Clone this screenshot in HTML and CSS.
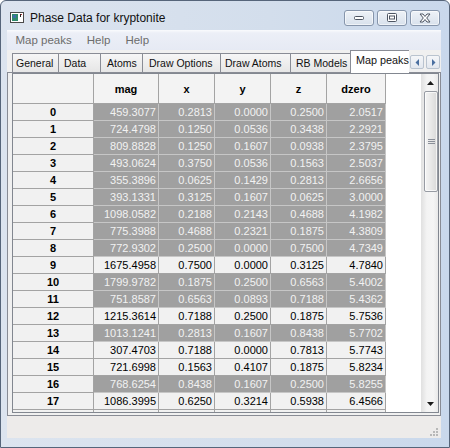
FILE: index.html
```html
<!DOCTYPE html>
<html>
<head>
<meta charset="utf-8">
<link rel="stylesheet" href="styles.css">
</head>
<body>
<div class="window">
  <div class="titlebar">
    <svg class="app-icon" width="14" height="11" viewBox="0 0 14 11">
      <rect x="0.5" y="0.5" width="13" height="10" fill="#ffffff" stroke="#4a4a4a"/>
      <rect x="2" y="2" width="6" height="7" fill="#2f8a6c"/>
      <rect x="3" y="3" width="3" height="3" fill="#3d6fa8"/>
      <rect x="10" y="2" width="1" height="3" fill="#222"/>
      <rect x="11" y="2" width="1" height="1" fill="#c03030"/>
    </svg>
    <span class="title">Phase Data for kryptonite</span>
    <div class="caption-buttons">
      <div class="cbtn">
        <svg width="12" height="6" viewBox="0 0 12 6"><rect x="1.5" y="1.5" width="9" height="3" rx="1" fill="#fff" stroke="#4d5562"/></svg>
      </div>
      <div class="cbtn">
        <svg width="10" height="9" viewBox="0 0 10 9"><rect x="0.5" y="0.5" width="9" height="8" rx="1" fill="#fff" stroke="#4d5562"/><rect x="2.5" y="3" width="5" height="3" fill="#fff" stroke="#4d5562"/></svg>
      </div>
      <div class="cbtn">
        <svg width="12" height="10" viewBox="0 0 12 10"><path d="M1 1 L4 1 L6 3.5 L8 1 L11 1 L7.7 5 L11 9 L8 9 L6 6.5 L4 9 L1 9 L4.3 5 Z" fill="#fff" stroke="#4d5562" stroke-width="1" stroke-linejoin="round"/></svg>
      </div>
    </div>
  </div>
  <div class="client">
    <div class="menubar">
      <span class="menu-item">Map peaks</span>
      <span class="menu-item">Help</span>
      <span class="menu-item">Help</span>
    </div>
    <div class="tabstrip">
      <div class="tab tab-general">General</div>
      <div class="tab tab-data">Data</div>
      <div class="tab tab-atoms">Atoms</div>
      <div class="tab tab-drawopt">Draw Options</div>
      <div class="tab tab-drawatoms">Draw Atoms</div>
      <div class="tab tab-rb">RB Models</div>
      <div class="tab tab-map selected">Map peaks</div>
      <div class="tab-arrows">
        <div class="tab-arrow"><svg width="5" height="7" viewBox="0 0 5 7"><path d="M4 0 L0.5 3.5 L4 7 Z" fill="#4a6fa0"/></svg></div>
        <div class="tab-arrow"><svg width="5" height="7" viewBox="0 0 5 7"><path d="M1 0 L4.5 3.5 L1 7 Z" fill="#4a6fa0"/></svg></div>
      </div>
    </div>
    <div class="panel">
      <div class="gridframe">
        <div class="gridview">
          <table class="grid">
            <colgroup>
              <col class="c-rh"><col class="c-mag"><col class="c-x"><col class="c-y"><col class="c-z"><col class="c-dz">
            </colgroup>
            <thead>
              <tr><th></th><th>mag</th><th>x</th><th>y</th><th>z</th><th>dzero</th></tr>
            </thead>
            <tbody>
              <tr class="sel"><th>0</th><td>459.3077</td><td>0.2813</td><td>0.0000</td><td>0.2500</td><td>2.0517</td></tr>
              <tr class="sel"><th>1</th><td>724.4798</td><td>0.1250</td><td>0.0536</td><td>0.3438</td><td>2.2921</td></tr>
              <tr class="sel"><th>2</th><td>809.8828</td><td>0.1250</td><td>0.1607</td><td>0.0938</td><td>2.3795</td></tr>
              <tr class="sel"><th>3</th><td>493.0624</td><td>0.3750</td><td>0.0536</td><td>0.1563</td><td>2.5037</td></tr>
              <tr class="sel"><th>4</th><td>355.3896</td><td>0.0625</td><td>0.1429</td><td>0.2813</td><td>2.6656</td></tr>
              <tr class="sel"><th>5</th><td>393.1331</td><td>0.3125</td><td>0.1607</td><td>0.0625</td><td>3.0000</td></tr>
              <tr class="sel"><th>6</th><td>1098.0582</td><td>0.2188</td><td>0.2143</td><td>0.4688</td><td>4.1982</td></tr>
              <tr class="sel"><th>7</th><td>775.3988</td><td>0.4688</td><td>0.2321</td><td>0.1875</td><td>4.3809</td></tr>
              <tr class="sel"><th>8</th><td>772.9302</td><td>0.2500</td><td>0.0000</td><td>0.7500</td><td>4.7349</td></tr>
              <tr><th>9</th><td>1675.4958</td><td>0.7500</td><td>0.0000</td><td>0.3125</td><td>4.7840</td></tr>
              <tr class="sel"><th>10</th><td>1799.9782</td><td>0.1875</td><td>0.2500</td><td>0.6563</td><td>5.4002</td></tr>
              <tr class="sel"><th>11</th><td>751.8587</td><td>0.6563</td><td>0.0893</td><td>0.7188</td><td>5.4362</td></tr>
              <tr><th>12</th><td>1215.3614</td><td>0.7188</td><td>0.2500</td><td>0.1875</td><td>5.7536</td></tr>
              <tr class="sel"><th>13</th><td>1013.1241</td><td>0.2813</td><td>0.1607</td><td>0.8438</td><td>5.7702</td></tr>
              <tr><th>14</th><td>307.4703</td><td>0.7188</td><td>0.0000</td><td>0.7813</td><td>5.7743</td></tr>
              <tr><th>15</th><td>721.6998</td><td>0.1563</td><td>0.4107</td><td>0.1875</td><td>5.8234</td></tr>
              <tr class="sel"><th>16</th><td>768.6254</td><td>0.8438</td><td>0.1607</td><td>0.2500</td><td>5.8255</td></tr>
              <tr><th>17</th><td>1086.3995</td><td>0.6250</td><td>0.3214</td><td>0.5938</td><td>6.4566</td></tr>
              <tr><th></th><td></td><td></td><td></td><td></td><td></td></tr>
            </tbody>
          </table>
        </div>
        <div class="vscroll">
          <div class="sbtn"><svg width="7" height="4" viewBox="0 0 7 4"><path d="M3.5 0 L7 4 L0 4 Z" fill="#1a1a1a"/></svg></div>
          <div class="track">
            <div class="thumb">
              <svg width="7" height="5" viewBox="0 0 7 5"><path d="M0 0.5 H7 M0 2.5 H7 M0 4.5 H7" stroke="#8a8f99" stroke-width="1"/></svg>
            </div>
          </div>
          <div class="sbtn"><svg width="7" height="4" viewBox="0 0 7 4"><path d="M0 0 L7 0 L3.5 4 Z" fill="#1a1a1a"/></svg></div>
        </div>
      </div>
    </div>
    <div class="statusbar">
      <svg class="grip" width="9" height="9" viewBox="0 0 9 9">
        <rect x="6" y="0" width="2" height="2" fill="#b8b8b8"/>
        <rect x="3" y="3" width="2" height="2" fill="#b8b8b8"/>
        <rect x="6" y="3" width="2" height="2" fill="#b8b8b8"/>
        <rect x="0" y="6" width="2" height="2" fill="#b8b8b8"/>
        <rect x="3" y="6" width="2" height="2" fill="#b8b8b8"/>
        <rect x="6" y="6" width="2" height="2" fill="#b8b8b8"/>
      </svg>
    </div>
  </div>
</div>
</body>
</html>
```

FILE: styles.css
```css
* { box-sizing: border-box; }
html, body { margin: 0; padding: 0; }
body {
  width: 450px;
  height: 448px;
  overflow: hidden;
  background: #ffffff;
  font-family: "Liberation Sans", Arial, sans-serif;
}

.window {
  width: 450px;
  height: 448px;
  border: 1px solid #56657a;
  border-radius: 6px 6px 0 0;
  background: linear-gradient(to right, #dce4ef 0%, #d3deec 60%, #c9d8ec 100%);
  padding: 0 8px 9px 6px;
  display: flex;
  flex-direction: column;
}

.titlebar {
  height: 29px;
  flex: none;
  display: flex;
  align-items: center;
  padding-left: 3px;
}
.app-icon { margin-top: 4px; flex: none; }
.title {
  margin-left: 6px;
  margin-top: 4px;
  font-size: 12px;
  color: #111;
}
.caption-buttons {
  margin-left: auto;
  margin-right: 1px;
  margin-top: 4px;
  display: flex;
  gap: 3px;
}
.cbtn {
  width: 30px;
  height: 16px;
  border: 1px solid #8695ab;
  border-radius: 3px;
  background: linear-gradient(#eef2f7, #d8e1ec);
  box-shadow: inset 0 0 0 1px rgba(255,255,255,0.6);
  display: flex;
  align-items: center;
  justify-content: center;
}

.client {
  flex: 1;
  display: flex;
  flex-direction: column;
  background: #f0f0f0;
}

.menubar {
  height: 20px;
  flex: none;
  display: flex;
  align-items: center;
  padding-left: 1px;
  background: linear-gradient(#fafbfd 0%, #eceff7 15%, #e6eaf4 100%);
  font-size: 11.5px;
  color: #6d6d6d;
}
.menu-item { padding: 0 7.5px; }

.tabstrip {
  height: 22px;
  flex: none;
  display: flex;
  align-items: flex-end;
  padding-left: 5px;
  position: relative;
  z-index: 1;
  font-size: 10.5px;
  color: #111;
}
.tab {
  height: 19px;
  border: 1px solid #898c95;
  border-bottom: none;
  margin-right: -1px;
  background: linear-gradient(#f6f6f6, #e6e6e6);
  padding-left: 4px;
  display: flex;
  align-items: center;
  white-space: nowrap;
  overflow: hidden;
}
.tab-general { width: 47px; padding-left: 3px; }
.tab-data { width: 43px; padding-left: 5px; }
.tab-atoms { width: 43px; padding-left: 6px; }
.tab-drawopt { width: 79px; padding-left: 6px; }
.tab-drawatoms { width: 71px; padding-left: 4px; }
.tab-rb { width: 61px; padding-left: 5px; }
.tab.selected {
  width: 59px;
  height: 23px;
  margin-bottom: -1px;
  margin-right: 0;
  border-right: none;
  background: #ffffff;
  padding-left: 5px;
  align-items: flex-start;
  padding-top: 3px;
  font-size: 10.8px;
}
.tab-arrows {
  display: flex;
  gap: 2px;
  margin-left: 1px;
  align-self: center;
  margin-top: 2px;
}
.tab-arrow {
  width: 14px;
  height: 14px;
  border: 1px solid #b9c3cf;
  border-radius: 2px;
  background: linear-gradient(#f4f6f9, #e2e7ee);
  display: flex;
  align-items: center;
  justify-content: center;
}

.panel {
  height: 344px;
  flex: none;
  border: 1px solid #898c95;
  background: #f0f0f0;
  padding: 0 1px 2px 4px;
}
.gridframe {
  height: 340px;
  border: 1px solid #828790;
  display: flex;
  background: #ffffff;
}
.gridview {
  flex: 1;
  overflow: hidden;
  background: #ffffff;
}

.grid {
  border-collapse: separate;
  border-spacing: 0;
  table-layout: fixed;
  width: 373px;
  font-size: 11px;
}
.c-rh { width: 81px; }
.c-mag { width: 65px; }
.c-x, .c-y, .c-z { width: 56px; }
.c-dz { width: 59px; }

.grid th, .grid td {
  border-right: 1px solid #a3a3a3;
  border-bottom: 1px solid #a3a3a3;
  height: 17px;
  padding: 0 2px 0 0;
  line-height: 16px;
  white-space: nowrap;
  overflow: hidden;
}
.grid thead th {
  height: 30px;
  text-align: center;
  font-weight: bold;
  background: #f3f3f3;
  color: #000;
  padding: 0;
}
.grid tbody th {
  text-align: center;
  font-weight: bold;
  background: #f1f1f1;
  color: #000;
  padding: 0;
}
.grid td {
  text-align: right;
  background: #f1f1f1;
  color: #000;
}
.grid tr.sel td {
  background: #a0a0a0;
  color: #f2f2f2;
  border-right-color: #c6c6c6;
  border-bottom-color: #c6c6c6;
}

.vscroll {
  width: 17px;
  flex: none;
  display: flex;
  flex-direction: column;
  background: linear-gradient(to right, #e3e3e3, #f3f3f3 30%, #f5f5f5 70%, #e9e9e9);
  border-left: 1px solid #e2e2e2;
}
.sbtn {
  height: 17px;
  flex: none;
  display: flex;
  align-items: center;
  justify-content: center;
}
.track { flex: 1; padding: 0 0 0 2px; }
.thumb {
  height: 101px;
  border: 1px solid #979ba3;
  border-radius: 2px;
  background: linear-gradient(to right, #f4f4f4, #e8e8e8 50%, #d9d9d9);
  box-shadow: inset 0 0 0 1px rgba(255,255,255,0.7);
  display: flex;
  align-items: center;
  justify-content: center;
}

.statusbar {
  flex: 1;
  display: flex;
  justify-content: flex-end;
  align-items: flex-end;
  background: #edebea;
  padding: 0 2px 1px 0;
}
```
